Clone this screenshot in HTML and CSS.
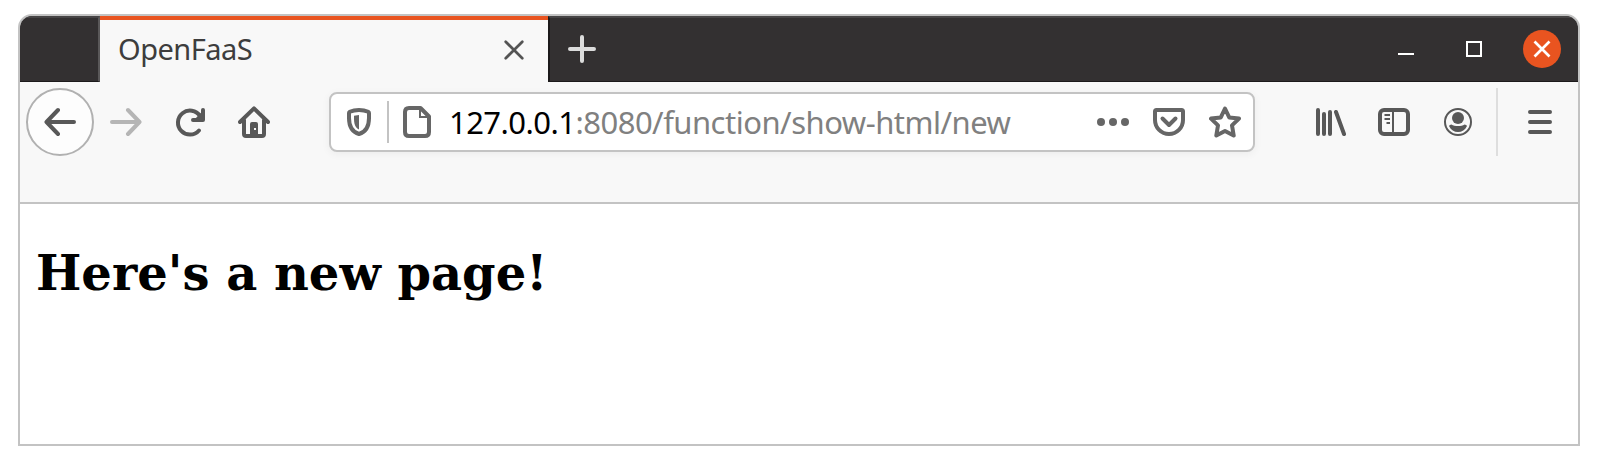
FILE: index.html
```html
<!DOCTYPE html>
<html lang="en">
<head>
<meta charset="utf-8">
<title>OpenFaaS</title>
<link rel="stylesheet" href="styles.css">
</head>
<body>
<div class="window">
  <header class="tabbar">
    <div class="tab-spacer"></div>
    <div class="tab">
      <span class="tab-title">OpenFaaS</span>
      <svg class="tab-close" viewBox="0 0 20 20"><path d="M1.7 1.7 18.3 18.3M18.3 1.7 1.7 18.3"/></svg>
    </div>
    <div class="titlebar">
      <svg class="new-tab" viewBox="0 0 28 28"><path d="M14 2V26M2 14H26"/></svg>
      <div class="controls">
        <svg class="ctl" viewBox="0 0 16 16"><path d="M0 13H16"/></svg>
        <svg class="ctl" viewBox="0 0 16 16"><path d="M1 1H15V15H1Z"/></svg>
        <svg class="close" viewBox="0 0 38 38"><circle cx="19" cy="19" r="19"/><path d="M11.5 11.5 26.5 26.5M26.5 11.5 11.5 26.5"/></svg>
      </div>
    </div>
  </header>
  <nav class="toolbar">
    <div class="nav-buttons">
      <span class="back"><svg class="icon" viewBox="0 0 32 32"><path class="line" d="M30 16H3M14 4 2.5 16 14 28"/></svg></span>
      <svg class="icon forward" viewBox="0 0 32 32"><path class="line" d="M2 16H29M18 4 29.5 16 18 28"/></svg>
      <svg class="icon" viewBox="0 0 32 32"><path class="line" d="M26 10A12 12 0 1 0 25 24.5M29 4V14H19"/><path class="fill" d="M29.5 4V14H20Z"/></svg>
      <svg class="icon" viewBox="0 0 32 32"><path class="line" d="M2 16 16 2.4 30 16M6 14V28Q6 30 8 30H24Q26 30 26 28V14"/><path class="fill" fill-rule="evenodd" d="M12 30V18Q12 16 14 16H18Q20 16 20 18V30ZM16 22V24H18V22Z"/></svg>
    </div>
    <div class="urlbar">
      <svg class="icon shield" viewBox="0 0 32 32"><path class="line" d="M16 4C12 4 9 4.8 6.8 5.8Q6 6.2 6 7V12C6 20 9 26 16 28C23 26 26 20 26 12V7Q26 6.200 25.200 5.800C23 4.800 20 4 16 4Z"/><path class="fill" d="M16 9V23.500C12 21.500 11 18 11 12V9.700Z"/></svg>
      <span class="divider"></span>
      <svg class="icon page" viewBox="0 0 32 32"><path class="line" d="M19.500 2H8Q4 2 4 6V26Q4 30 8 30H24Q28 30 28 26V10.500Z"/><path class="fold" d="M19 1V11H29"/></svg>
      <span class="address"><span class="host">127.0.0.1</span><span class="path">:8080/function/show-html/new</span></span>
      <div class="page-actions">
        <svg class="icon" viewBox="0 0 32 32"><circle class="fill" cx="4" cy="16" r="4"/><circle class="fill" cx="16" cy="16" r="4"/><circle class="fill" cx="28" cy="16" r="4"/></svg>
        <svg class="icon" viewBox="0 0 32 32"><path class="line" d="M3.500 4H28.500Q30 4 30 5.500V14A14 14 0 0 1 2 14V5.500Q2 4 3.500 4ZM9.500 12.500 16 19 22.500 12.500"/></svg>
        <svg class="icon" viewBox="0 0 32 32"><path class="line" d="M16 2.500 20.200 11.400 30 12.600 23 19.400 24.700 29.500 16 24.900 7.300 29.500 9 19.400 2 12.600 11.800 11.400Z"/></svg>
      </div>
    </div>
    <div class="tools">
      <svg class="icon" viewBox="0 0 32 32"><path class="line" d="M4 4V28M10 8V28M16 6V28M22 6 30 28"/></svg>
      <svg class="icon" viewBox="0 0 32 32"><rect class="line" x="2" y="4" width="28" height="24" rx="4"/><path class="thin" d="M15 4V28M6.500 9H12M6.500 13H12M8.500 17H12"/></svg>
      <svg class="icon" viewBox="0 0 32 32"><circle class="thin" cx="16" cy="16" r="13"/><circle class="fill" cx="16" cy="12" r="6"/><path class="fill" d="M9.500 18.500C12.500 20.600 19.500 20.600 22.500 18.500Q24.500 18.500 25 20C23 24 20 26 16 26S9 24 7 20Q7.500 18.500 9.500 18.500Z"/></svg>
    </div>
    <div class="menu">
      <svg class="icon" viewBox="0 0 32 32"><path class="line" d="M6 6H26M6 16H26M6 26H26"/></svg>
    </div>
  </nav>
  <main class="content"><h1>Here's a new page!</h1></main>
</div>
</body>
</html>
```
FILE: styles.css
```css
* { box-sizing: border-box; }
body { margin: 0; padding: 14px 18px; background: #fff; font-family: "Noto Sans", "Open Sans", sans-serif; }
svg { display: block; flex: none; fill: none; }
.window { width: 1562px; height: 432px; border: 2px solid #c3c3c3; border-radius: 14px 14px 0 0; overflow: hidden; background: #fff; }
.tabbar { display: flex; height: 66px; background: #333031; }
.tab-spacer { width: 80px; border-top: 2px solid #464445; border-right: 2px solid #5a5859; border-bottom: 1px solid #1c1a1b; }
.tab { display: flex; align-items: center; justify-content: space-between; width: 448px; padding: 0 24px 2px 18px; border-top: 4px solid #e95420; background: #f8f8f8; }
.tab-title { padding-bottom: 2px; color: #3d3d3d; font-size: 29px; line-height: 40px; letter-spacing: -0.5px; white-space: nowrap; }
.tab-close { width: 20px; height: 20px; stroke: #545454; stroke-width: 2.7; stroke-linecap: round; }
.titlebar { flex: 1; display: flex; justify-content: space-between; align-items: center; padding: 0 17px 1px 18px; border-top: 2px solid #464445; border-left: 2px solid #1c1a1b; border-bottom: 1px solid #1c1a1b; }
.new-tab { width: 28px; height: 28px; stroke: #dcdcdc; stroke-width: 4; stroke-linecap: round; }
.controls { display: flex; align-items: center; }
.ctl { width: 16px; height: 16px; stroke: #fff; stroke-width: 2; margin-right: 52px; }
.ctl + .ctl { margin-right: 41px; }
.close { width: 38px; height: 38px; stroke: #fff; stroke-width: 2.7; }
.close circle { fill: #e95420; stroke: none; }
.toolbar { display: flex; height: 122px; padding: 6px 0 46px 6px; background: #f8f8f8; border-bottom: 2px solid #c3c3c3; color: #585858; }
.icon { width: 32px; height: 32px; }
.line { stroke: currentColor; stroke-width: 4; stroke-linecap: round; stroke-linejoin: round; }
.thin { stroke: currentColor; stroke-width: 2; }
.fill { fill: currentColor; }
.nav-buttons { display: flex; align-items: center; width: 303px; }
.nav-buttons > .icon { margin-right: 32px; }
.back { display: flex; align-items: center; justify-content: center; width: 68px; height: 68px; margin-right: 16px; border: 2px solid #b1b1b1; border-radius: 50%; background: #fdfdfd; }
.forward { color: #b5b5b5; }
.urlbar { display: flex; align-items: center; width: 926px; height: 60px; margin-top: 4px; padding: 0 12px; border: 2px solid #c3c3c3; border-radius: 8px; background: #fff; box-shadow: 0 2px 8px rgba(0,0,0,.05); color: #666; }
.divider { width: 2px; height: 42px; margin: 0 12px; background: #c3c3c3; }
.fold { stroke: currentColor; stroke-width: 2; }
.address { margin-left: 16px; font-size: 31px; line-height: 44px; white-space: nowrap; color: #808080; }
.host { color: #000; letter-spacing: -0.55px; }
.path { letter-spacing: -0.5px; }
.page-actions { display: flex; gap: 24px; margin-left: auto; }
.tools { display: flex; align-items: center; gap: 32px; margin-left: 59px; }
.menu { display: flex; align-items: center; margin-left: 22px; padding-left: 26px; border-left: 2px solid #dedede; }
.content { padding: 32px 16px; }
.content h1 { margin: 0; color: #000; font: bold 48px/74px "DejaVu Serif", serif; }
```
